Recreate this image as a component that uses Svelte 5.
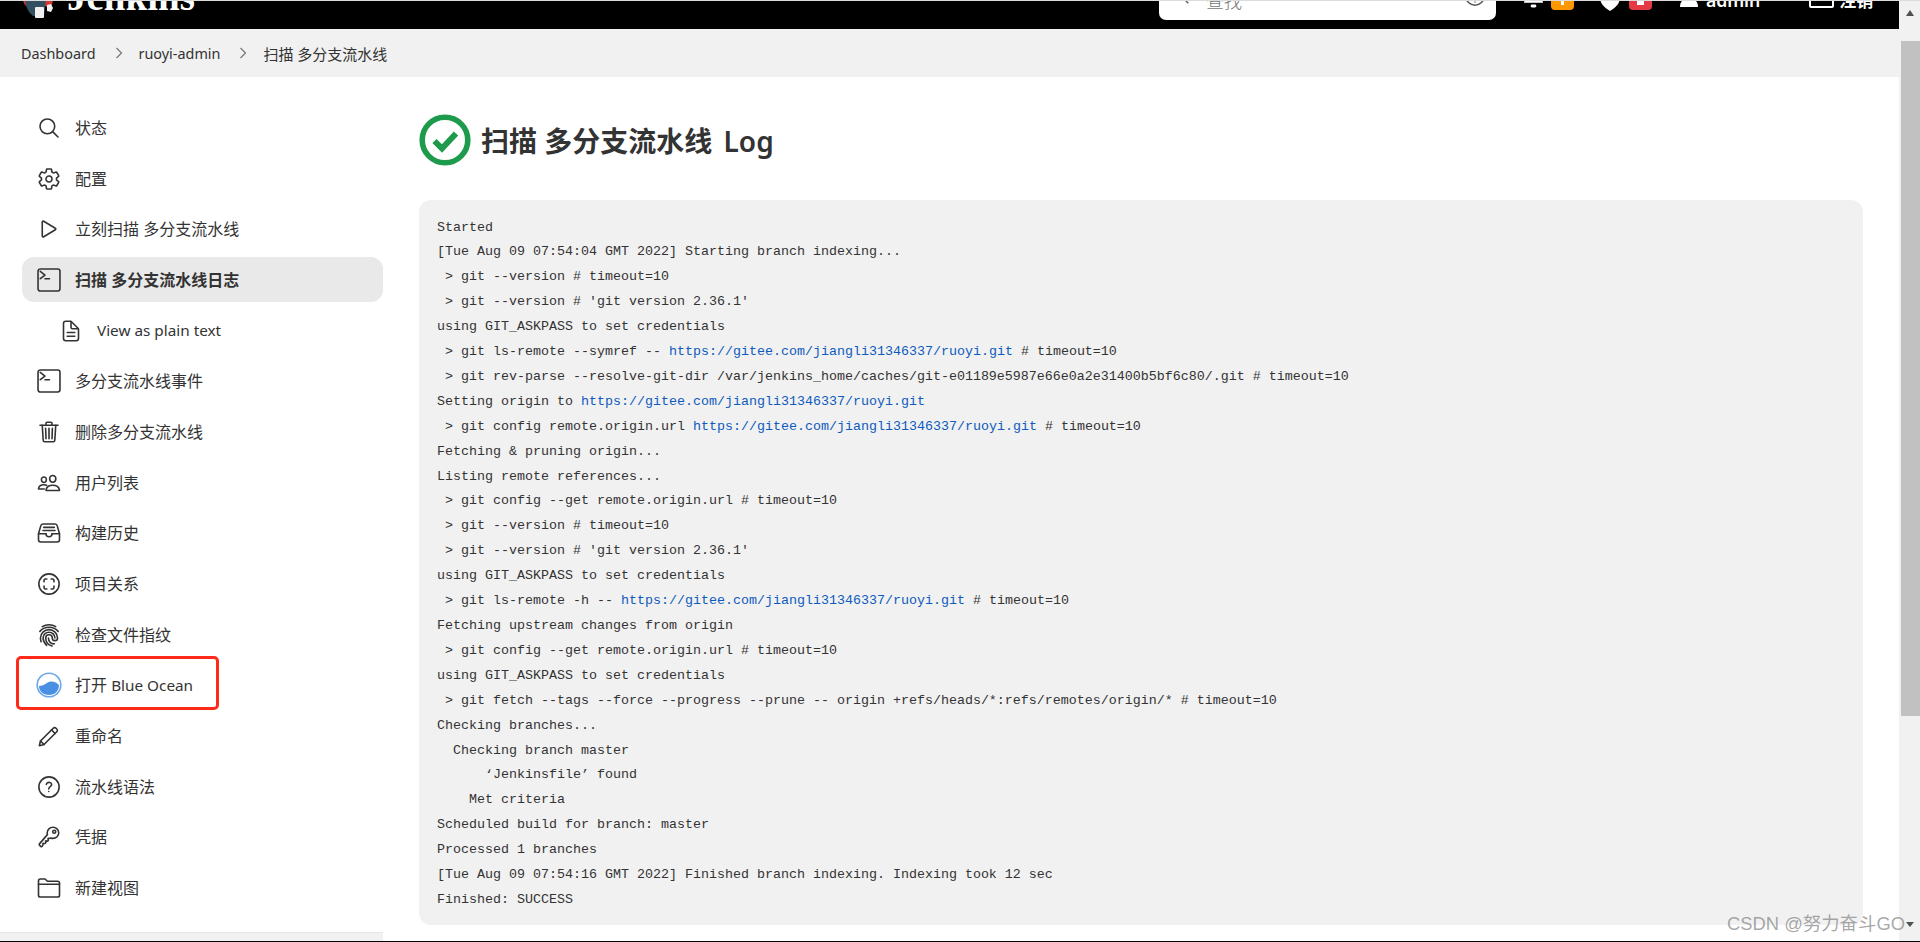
<script>
  const icons = {
    search: ['M221 64a157 157 0 100 314 157 157 0 000-314z', 'M338 338l110 110'],
    settings: ['M262.29 192.31a64 64 0 1057.4 57.4 64.13 64.13 0 00-57.4-57.4zM416.39 256a154.34 154.34 0 01-1.53 20.79l45.21 35.46a10.81 10.81 0 012.45 13.75l-42.77 74a10.81 10.81 0 01-13.14 4.59l-44.9-18.08a16.11 16.11 0 00-15.17 1.75A164.48 164.48 0 01325 400.8a15.94 15.94 0 00-8.82 12.14l-6.73 47.89a11.08 11.08 0 01-10.68 9.17h-85.54a11.11 11.11 0 01-10.69-8.87l-6.72-47.82a16.07 16.07 0 00-9-12.22 155.3 155.3 0 01-21.46-12.57 16 16 0 00-15.11-1.71l-44.89 18.07a10.81 10.81 0 01-13.14-4.58l-42.77-74a10.8 10.8 0 012.45-13.75l38.21-30a16.05 16.05 0 006-14.08c-.36-4.17-.58-8.33-.58-12.5s.21-8.27.58-12.35a16 16 0 00-6.07-13.94l-38.19-30A10.81 10.81 0 0149.48 186l42.77-74a10.81 10.81 0 0113.14-4.59l44.9 18.08a16.11 16.11 0 0015.17-1.75A164.48 164.48 0 01187 111.2a15.94 15.94 0 008.82-12.14l6.73-47.89A11.08 11.08 0 01213.23 42h85.54a11.11 11.11 0 0110.69 8.87l6.72 47.82a16.07 16.07 0 009 12.22 155.3 155.3 0 0121.46 12.57 16 16 0 0015.11 1.71l44.89-18.07a10.81 10.81 0 0113.14 4.58l42.77 74a10.8 10.8 0 01-2.45 13.75l-38.21 30a16.05 16.05 0 00-6.05 14.08c.33 4.14.55 8.3.55 12.47z'],
    play: ['M112 111v290c0 17.44 17 28.52 31 20.16l247.9-148.37c12.12-7.25 12.12-26.33 0-33.58L143 90.84c-14-8.36-31 2.72-31 20.16z'],
    terminal: ['M70 21h372a48 48 0 0148 48v374a48 48 0 01-48 48H70a48 48 0 01-48-48V69a48 48 0 0148-48z', 'M70 70l100 80-100 78', 'M170 228h96'],
    doc: ['M416 221.25V416a48 48 0 01-48 48H144a48 48 0 01-48-48V96a48 48 0 0148-48h98.75a32 32 0 0122.62 9.37l141.26 141.26a32 32 0 019.37 22.62z', 'M256 56v120a32 32 0 0032 32h120', 'M176 288h160', 'M176 368h160'],
    trash: ['M112 112l20 320c.95 18.49 14.4 32 32 32h184c17.68 0 30.87-13.51 32-32l20-320', 'M64 112h384', 'M192 112V72a23.93 23.93 0 0124-24h80a23.93 23.93 0 0124 24v40', 'M256 176v224M184 176l8 224M328 176l-8 224'],
    people: ['M402 168c-2.93 40.67-33.1 72-66 72s-63.12-31.32-66-72c-3-42.31 26.37-72 66-72s69 30.46 66 72z', 'M336 304c-65.17 0-127.84 32.37-143.54 95.41-2.08 8.34 3.15 16.59 11.72 16.59h263.65c8.57 0 13.77-8.25 11.72-16.59C463.85 335.36 401.18 304 336 304z', 'M200 185.94c-2.34 32.48-26.72 58.06-53 58.06s-50.7-25.57-53-58.06C91.61 152.15 115.34 128 147 128s55.39 24.77 53 57.94z', 'M206 306c-18.05-8.27-37.93-11.45-59-11.45-52 0-102.1 25.85-114.65 76.2-1.65 6.66 2.53 13.25 9.37 13.25H154'],
    tray: ['M384 64H128c-26 0-43 14-48 40L32 272v128a48.14 48.14 0 0048 48h352a48.14 48.14 0 0048-48V272l-48-168c-5-27-23-40-48-40z', 'M32 272h160M320 272h160', 'M192 272a64 64 0 00128 0', 'M144 136h224M128 204h256'],
    relation: ['M256 40a216 216 0 110 432 216 216 0 010-432z', 'M150 210v-30a30 30 0 0130-30h30', 'M302 150h30a30 30 0 0130 30v30', 'M362 302v30a30 30 0 01-30 30h-30', 'M210 362h-30a30 30 0 01-30-30v-30'],
    finger: ['M112 78C196 24 316 24 400 78', 'M60 180C150 60 362 60 452 180', 'M205 478C160 430 130 380 130 318 130 250 186 196 256 196s126 54 126 122', 'M370 444C310 452 244 410 244 320', 'M322 490C240 466 186 400 186 318 186 280 218 250 256 250s70 30 70 68 30 58 58 58 54-26 54-58C438 222 356 142 256 142S74 222 74 318c0 24 4 52 14 80'],
    pencil: ['M50 462l24-100L346 90a42 42 0 0160 0l16 16a42 42 0 010 60L150 438z', 'M310 126l76 76', 'M74 362l76 76'],
    help: ['M256 40a216 216 0 110 432 216 216 0 010-432z', 'M200 202.29s.84-17.5 19.57-32.57C230.68 160.77 244 158.18 256 158c10.93-.14 20.69 1.67 26.53 4.45 10 4.76 29.47 16.38 29.47 41.09 0 26-17 37.81-36.37 50.8S251 281.43 251 296', 'M250 352h.01'],
    key: ['M218.1 167.17c0 13 0 25.6 4.1 37.4-43.1 50.6-156.9 184.3-167.5 194.5a20.17 20.17 0 00-6.7 15c0 8.5 5.2 16.7 9.6 21.3 6.6 6.9 34.8 33 40 28 15.4-15 18.5-19 24.8-25.2 9.5-9.3-1-28.3 2.3-36s6.8-9.2 12.5-10.4 15.8 2.9 23.7 3c8.3.1 12.8-3.4 19-9.2 5-4.6 8.6-8.9 8.7-15.6.2-9-12.8-20.9-3.1-30.4s23.7 6.2 34 5 22.8-15.5 24.1-21.6-11.7-21.8-9.7-30.7c.7-3 6.8-10 11.4-11s25 6.9 29.6 5.9c5.6-1.2 12.1-7.1 17.4-10.4 15.5 6.7 29.6 9.4 47.7 9.4 68.5 0 124-53.4 124-119.2S408.5 48 340 48s-121.9 53.37-121.9 119.17z', 'M368 112a32 32 0 110 64 32 32 0 010-64z'],
    folder: ['M440 448H72a40 40 0 01-40-40V104a40 40 0 0140-40h100l50 48h218a40 40 0 0140 40v256a40 40 0 01-40 40z', 'M32 176h448']
  };

  const tasks = [
    { icon: 'search', label: '状态' },
    { icon: 'settings', label: '配置' },
    { icon: 'play', label: '立刻扫描 多分支流水线' },
    { icon: 'terminal', label: '扫描 多分支流水线日志', active: true },
    { icon: 'doc', latin: 'View as plain text', sub: true },
    { icon: 'terminal', label: '多分支流水线事件' },
    { icon: 'trash', label: '删除多分支流水线' },
    { icon: 'people', label: '用户列表' },
    { icon: 'tray', label: '构建历史' },
    { icon: 'relation', label: '项目关系' },
    { icon: 'finger', label: '检查文件指纹' },
    { icon: 'ocean', label: '打开 ', latin: 'Blue Ocean', marked: true },
    { icon: 'pencil', label: '重命名' },
    { icon: 'help', label: '流水线语法' },
    { icon: 'key', label: '凭据' },
    { icon: 'folder', label: '新建视图' }
  ];

  const repo = 'https://gitee.com/jiangli31346337/ruoyi.git';
</script>

<div class="page">
  <div class="content">
    <header class="topbar">
      <svg class="logo" viewBox="0 0 31 20" width="31" height="20">
        <path d="M1 0 Q1 4 4 7 L24 7 L31 0z" fill="#d33833" />
        <path d="M24 1 L31 1 L30 6 L24 8z" fill="#d33833" />
        <path d="M3 0 Q4 12 11 17 L22 17 L24 0z" fill="#335061" />
        <rect x="13" y="8" width="9" height="11" rx="1" fill="#f0f0f0" />
        <path d="M25 6 l4-1 2 4 -2 4 -4-1z" fill="#f0f0f0" />
      </svg>
      <span class="brand">Jenkins</span>
      <div class="search">
        <svg class="search-icon" viewBox="0 0 24 24" width="20" height="20" fill="none" stroke="#555" stroke-width="1.6">
          <circle cx="10" cy="10" r="7" /><path d="M15.5 15.5 22 22" />
        </svg>
        <span class="search-text">查找</span>
        <svg class="search-help" viewBox="0 0 24 24" width="22" height="22" fill="none" stroke="#555" stroke-width="1.6">
          <circle cx="12" cy="12" r="10" /><path d="M12 14v2M12 18v1" />
        </svg>
      </div>
      <svg class="bell" viewBox="0 0 20 24" width="19" height="24" fill="#fff">
        <path d="M10 0C5 0 3 5 3 10c0 4-2 6-3 7v1h20v-1c-1-1-3-3-3-7 0-5-2-10-7-10z" /><rect x="7" y="20" width="6" height="3" rx="1.5" />
      </svg>
      <span class="badge orange"><i></i></span>
      <svg class="shield" viewBox="0 0 20 26" width="20" height="26">
        <path d="M10 0 20 3v9c0 7-5 11-10 14C5 23 0 19 0 12V3z" fill="#fff" /><circle cx="10" cy="12" r="3" fill="#000" />
      </svg>
      <span class="badge red"><i></i></span>
      <svg class="user" viewBox="0 0 18 24" width="18" height="24" fill="#fff">
        <circle cx="9" cy="6" r="6" /><path d="M0 24c0-6 4-9 9-9s9 3 9 9z" />
      </svg>
      <span class="admin">admin</span>
      <span class="logout-box"></span>
      <span class="logout">注销</span>
    </header>

    <nav class="crumbs">
      <span>Dashboard</span>
      <svg viewBox="0 0 8 12" width="8" height="12"><path d="M1.5 1 6.500 6l-5 5" /></svg>
      <span>ruoyi-admin</span>
      <svg viewBox="0 0 8 12" width="8" height="12"><path d="M1.5 1 6.500 6l-5 5" /></svg>
      <span class="crumb-current">扫描 多分支流水线</span>
    </nav>

    <div class="body">
      <aside class="side">
        <ul class="tasks">
          {#each tasks as task}
            <li class="task" class:active={task.active} class:sub={task.sub} class:marked={task.marked}>
              {#if task.icon === 'ocean'}
                <svg class="icon ocean" viewBox="0 0 26 26">
                  <circle cx="13" cy="13" r="11.8" fill="#fff" stroke="#6ea8ea" stroke-width="1.6" />
                  <path d="M3 14c3 0 5-1 8-3s7-2.500 12 2c0 6-4 10-10 10S3 19 3 14z" fill="#4a90e2" />
                </svg>
              {:else}
                <svg class="icon" viewBox="0 0 512 512">
                  {#each icons[task.icon] as d}
                    <path {d} />
                  {/each}
                </svg>
              {/if}
              <span class="label">{task.label ?? ''}{#if task.latin}<span class="latin">{task.latin}</span>{/if}</span>
            </li>
          {/each}
        </ul>
        <div class="pane"></div>
      </aside>

      <main class="main">
        <h1 class="title">
          <svg viewBox="0 0 52 52" width="52" height="52" fill="none" stroke="#1d9a4b">
            <circle cx="26" cy="26" r="22.8" stroke-width="5.6" />
            <path d="M15.500 27l7.500 7.500L37 19.500" stroke-width="6" />
          </svg>
          <span>扫描 多分支流水线 <span class="title-log">Log</span></span>
        </h1>
        <pre class="log">Started
[Tue Aug 09 07:54:04 GMT 2022] Starting branch indexing...
 &gt; git --version # timeout=10
 &gt; git --version # 'git version 2.36.1'
using GIT_ASKPASS to set credentials
 &gt; git ls-remote --symref -- <a href={repo}>{repo}</a> # timeout=10
 &gt; git rev-parse --resolve-git-dir /var/jenkins_home/caches/git-e01189e5987e66e0a2e31400b5bf6c80/.git # timeout=10
Setting origin to <a href={repo}>{repo}</a>
 &gt; git config remote.origin.url <a href={repo}>{repo}</a> # timeout=10
Fetching &amp; pruning origin...
Listing remote references...
 &gt; git config --get remote.origin.url # timeout=10
 &gt; git --version # timeout=10
 &gt; git --version # 'git version 2.36.1'
using GIT_ASKPASS to set credentials
 &gt; git ls-remote -h -- <a href={repo}>{repo}</a> # timeout=10
Fetching upstream changes from origin
 &gt; git config --get remote.origin.url # timeout=10
using GIT_ASKPASS to set credentials
 &gt; git fetch --tags --force --progress --prune -- origin +refs/heads/*:refs/remotes/origin/* # timeout=10
Checking branches...
  Checking branch master
      ‘Jenkinsfile’ found
    Met criteria
Scheduled build for branch: master
Processed 1 branches
[Tue Aug 09 07:54:16 GMT 2022] Finished branch indexing. Indexing took 12 sec
Finished: SUCCESS</pre>
      </main>
    </div>
  </div>

  <div class="scrollbar">
    <span class="arrow up"></span>
    <span class="thumb"></span>
    <span class="arrow down"></span>
  </div>

  <span class="watermark">CSDN @努力奋斗GO</span>
</div>

<style>
  :global(body) {
    margin: 0;
    background: #fff;
  }

  .page {
    position: relative;
    display: flex;
    box-sizing: border-box;
    height: 942px;
    overflow: hidden;
    border-top: 1px solid #dcdcdc;
    border-bottom: 1px solid #000;
    color: #333;
    font-family: "Noto Sans", "Noto Sans CJK SC", sans-serif;
  }

  .content {
    flex: 1;
    min-width: 0;
  }

  .topbar {
    display: flex;
    align-items: flex-end;
    height: 28px;
    overflow: hidden;
    background: #000;
    color: #fff;
  }

  .logo {
    flex: none;
    margin: 0 0 10px 22px;
  }

  .brand {
    flex: none;
    margin: 0 0 13px 14px;
    font-family: "Liberation Serif", serif;
    font-size: 39px;
    font-weight: 700;
    line-height: 39px;
  }

  .search {
    flex: none;
    display: flex;
    align-items: flex-end;
    box-sizing: border-box;
    width: 337px;
    height: 44px;
    margin: 0 0 9px 964px;
    padding: 0 10px 13px 11px;
    border-radius: 0 0 7px 7px;
    background: #fff;
    color: #777;
  }

  .search-icon {
    flex: none;
    margin-bottom: 2px;
  }

  .search-text {
    margin-left: 16px;
    font-size: 18px;
    font-weight: 300;
    line-height: 18px;
    margin-bottom: -3px;
  }

  .search-help {
    flex: none;
    margin: 0 0 0 auto;
  }

  .bell {
    flex: none;
    margin: 0 0 20px 28px;
  }

  .badge {
    flex: none;
    display: flex;
    justify-content: center;
    align-items: flex-end;
    width: 23px;
    height: 22px;
    margin-bottom: 19px;
    border-radius: 4px;
  }

  .badge i {
    height: 10px;
    margin-bottom: 5px;
    background: #fff;
  }

  .orange {
    margin-left: 8px;
    background: #ff9800;
  }

  .orange i {
    width: 3px;
  }

  .red {
    margin-left: 9px;
    background: #e63946;
  }

  .red i {
    width: 7px;
  }

  .shield {
    flex: none;
    margin: 0 0 18px 26px;
  }

  .user {
    flex: none;
    margin: 0 0 22px 28px;
  }

  .admin {
    flex: none;
    margin: 0 0 20px 8px;
    font-size: 17.6px;
    font-weight: 600;
    line-height: 18px;
  }

  .logout-box {
    flex: none;
    box-sizing: border-box;
    width: 25px;
    height: 20px;
    margin: 0 0 21px 49px;
    border: 2px solid #fff;
    border-radius: 2px;
  }

  .logout {
    flex: none;
    margin: 0 0 19px 5px;
    font-size: 17px;
    font-weight: 600;
    line-height: 18px;
  }

  .crumbs {
    display: flex;
    align-items: center;
    height: 48px;
    padding-left: 21px;
    background: #f1f1f1;
    font-size: 14.4px;
  }

  .crumbs svg {
    margin: 0 16px 0 19px;
    fill: none;
    stroke: #777;
    stroke-width: 1.2;
  }

  .crumb-current {
    font-size: 15px;
  }

  .body {
    display: flex;
  }

  .side {
    flex: none;
    width: 383px;
    padding-top: 28.5px;
  }

  .tasks {
    display: flex;
    flex-direction: column;
    gap: 5.67px;
    margin: 0 0 21.5px 22px;
    padding: 0;
    list-style: none;
  }

  .task {
    position: relative;
    display: flex;
    align-items: center;
    gap: 14px;
    height: 45px;
    padding-left: 15px;
    border-radius: 12px;
    font-size: 16px;
  }

  .label {
    margin-bottom: 2px;
  }

  .task.active {
    background: #e9e9e9;
    font-weight: 600;
  }

  .task.sub {
    padding-left: 37px;
  }

  .latin {
    font-size: 15.3px;
  }

  .task.marked::after {
    content: "";
    position: absolute;
    left: -6px;
    top: -7px;
    width: 203px;
    height: 54px;
    box-sizing: border-box;
    border: 3px solid #ff2a1a;
    border-radius: 5px;
  }

  .icon {
    flex: none;
    width: 24px;
    height: 24px;
    fill: none;
    stroke: #333;
    stroke-width: 34;
    stroke-linecap: round;
    stroke-linejoin: round;
  }

  .ocean {
    width: 26px;
    height: 26px;
    margin: 0 -1px;
    stroke: none;
  }

  .pane {
    height: 9px;
    border-top: 1px solid #e6e6e6;
    background: #f1f1f1;
  }

  .main {
    flex: 1;
    min-width: 0;
    margin: 0 36px 0 36px;
  }

  .title {
    display: flex;
    align-items: center;
    gap: 10px;
    height: 52px;
    margin: 37px 0 34px;
    font-size: 28px;
    font-weight: 600;
    color: #333;
  }

  .title-log {
    margin-left: 4px;
  }

  .log {
    box-sizing: border-box;
    height: 725px;
    margin: 0;
    padding: 15.5px 18px;
    overflow: hidden;
    border-radius: 12px;
    background: #f1f1f1;
    color: #333;
    font-family: "Liberation Mono", monospace;
    font-size: 13.33px;
    line-height: 24.9px;
  }

  .log a {
    color: #0e5bbd;
    text-decoration: none;
  }

  .scrollbar {
    flex: none;
    display: flex;
    flex-direction: column;
    align-items: flex-end;
    width: 21px;
    background: #f1f1f1;
  }

  .thumb {
    flex: none;
    width: 19px;
    height: 675px;
    margin-top: 25px;
    background: #c1c1c1;
  }

  .arrow {
    flex: none;
    width: 0;
    height: 0;
    margin-right: 6px;
    border-left: 4.5px solid transparent;
    border-right: 4.5px solid transparent;
  }

  .arrow.up {
    margin-top: 9px;
    border-bottom: 6px solid #505050;
  }

  .arrow.down {
    margin-top: 206px;
    border-top: 5px solid #505050;
  }

  .watermark {
    position: absolute;
    right: 15px;
    bottom: 5px;
    color: rgba(110, 110, 110, 0.6);
    font-family: "Liberation Sans", "Noto Sans CJK SC", sans-serif;
    font-size: 18.4px;
    line-height: 24px;
    white-space: nowrap;
  }
</style>
